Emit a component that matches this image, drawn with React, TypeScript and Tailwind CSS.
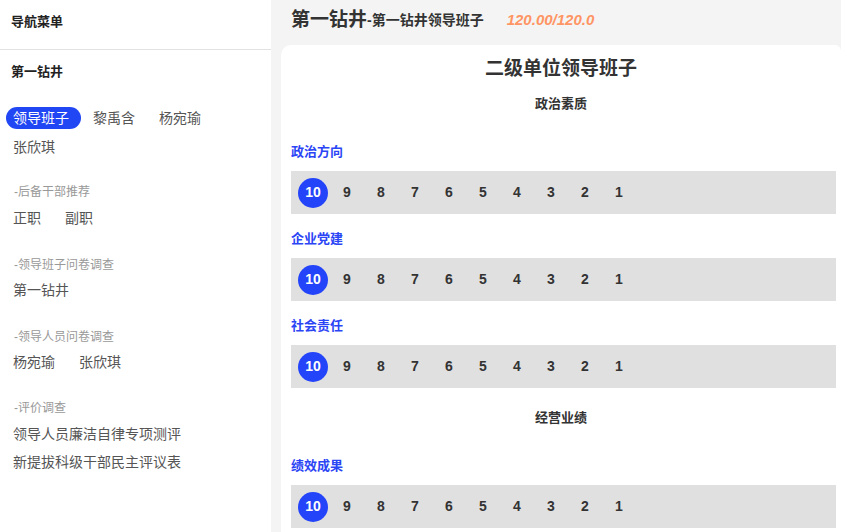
const font = { fontFamily: '"Liberation Sans", "Noto Sans CJK SC", sans-serif' };

type Item = { label: string; active?: boolean };

function ItemRow({ items }: { items: Item[] }) {
  return (
    <div className="flex flex-wrap gap-x-[5px] gap-y-[7px] pl-[6px] pr-[6px]">
      {items.map((it, i) => (
        <span
          key={i}
          className={`flex h-[22px] items-center rounded-full pl-[7px] pr-[12px] text-[14px] leading-[22px] ${it.active ? 'bg-[#2146f3] text-white' : 'text-[#555]'}`}
        >
          {it.label}
        </span>
      ))}
    </div>
  );
}

function Group({ title, items, mt, inner = 'mt-[5px]' }: { title: string; items: Item[]; mt: string; inner?: string }) {
  return (
    <div className={mt}>
      <div className="h-[20px] pl-[14px] text-[12px] leading-[20px] text-[#999]">{title}</div>
      <div className={inner}>
        <ItemRow items={items} />
      </div>
    </div>
  );
}

const scores = [10, 9, 8, 7, 6, 5, 4, 3, 2, 1];

function ScoreBar() {
  return (
    <div className="mr-[-5px] flex h-[43px] items-center gap-[4px] bg-[#e0e0e0] pl-[7px]">
      {scores.map((s) => (
        <span
          key={s}
          className={`flex h-[30px] w-[30px] items-center justify-center rounded-full text-[14px] font-bold ${s === 10 ? 'bg-[#2444fa] text-white' : 'text-[#333]'}`}
        >
          {s}
        </span>
      ))}
    </div>
  );
}

function Question({ label, first }: { label: string; first?: boolean }) {
  return (
    <div className={first ? 'mt-[28px]' : 'mt-[15px]'}>
      <div className="h-[20px] text-[13px] font-bold leading-[20px] text-[#2b45f5]">{label}</div>
      <div className="mt-[9px]">
        <ScoreBar />
      </div>
    </div>
  );
}

export default function App() {
  return (
    <div className="flex h-[532px] w-[841px] overflow-hidden bg-[#f4f4f4] text-[#333]" style={font}>
      <aside className="w-[271px] shrink-0 bg-white">
        <div className="flex h-[50px] items-center border-b border-[#e2e2e2] px-[11px] pb-[5px] text-[13px] font-bold text-[#222]">
          导航菜单
        </div>
        <div className="mt-[12px] h-[20px] px-[11px] text-[13px] font-bold leading-[20px] text-[#222]">第一钻井</div>
        <div className="mt-[25px]">
          <ItemRow items={[{ label: '领导班子', active: true }, { label: '黎禹含' }, { label: '杨宛瑜' }, { label: '张欣琪' }]} />
        </div>
        <Group mt="mt-[24px]" title="-后备干部推荐" items={[{ label: '正职' }, { label: '副职' }]} />
        <Group mt="mt-[26px]" inner="mt-[4px]" title="-领导班子问卷调查" items={[{ label: '第一钻井' }]} />
        <Group mt="mt-[26px]" inner="mt-[4px]" title="-领导人员问卷调查" items={[{ label: '杨宛瑜' }, { label: '张欣琪' }]} />
        <Group mt="mt-[25px]" title="-评价调查" items={[{ label: '领导人员廉洁自律专项测评' }]} />
        <div className="mt-[6px]">
          <ItemRow items={[{ label: '新提拔科级干部民主评议表' }]} />
        </div>
      </aside>
      <main className="flex min-w-0 flex-1 flex-col">
        <div className="flex h-[45px] shrink-0 items-center pl-[20px] pb-[4px]">
          <span className="text-[19px] font-bold text-[#333]">第一钻井</span>
          <span className="text-[14px] font-bold text-[#333]">-第一钻井领导班子</span>
          <span className="ml-[23px] text-[15px] font-bold italic text-[#ff9464]">120.00/120.0</span>
        </div>
        <div className="ml-[10px] flex-1 rounded-tl-[10px] rounded-tr-[6px] bg-white px-[10px]">
          <div className="mt-[10px] h-[28px] text-center text-[19px] font-bold leading-[28px] text-[#333]">二级单位领导班子</div>
          <div className="mt-[11px] h-[20px] text-center text-[13px] font-bold leading-[20px] text-[#333]">政治素质</div>
          <Question first label="政治方向" />
          <Question label="企业党建" />
          <Question label="社会责任" />
          <div className="mt-[20px] h-[20px] text-center text-[13px] font-bold leading-[20px] text-[#333]">经营业绩</div>
          <Question first label="绩效成果" />
        </div>
      </main>
    </div>
  );
}
